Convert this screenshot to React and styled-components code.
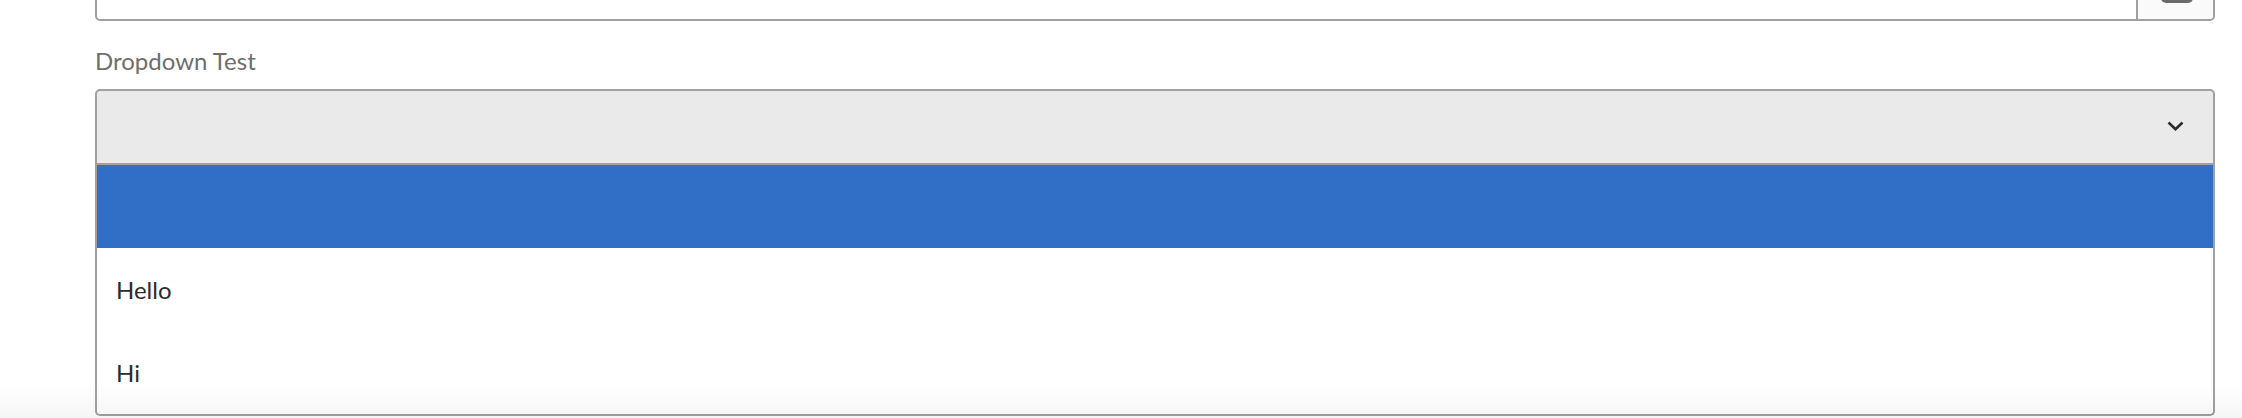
import React from "react";
import styled, { createGlobalStyle } from "styled-components";

const GlobalStyle = createGlobalStyle`
  html, body { margin: 0; padding: 0; background: #ffffff; }
  body { font-family: Lato, "Open Sans", sans-serif; }
  * { box-sizing: border-box; }
`;

const Page = styled.div`
  position: relative;
  height: 418px;
  overflow: hidden;
  padding: 0 27px 0 95px;
  &::after {
    content: "";
    position: absolute;
    left: 0;
    right: 0;
    bottom: 0;
    height: 34px;
    pointer-events: none;
    background: linear-gradient(rgba(0, 0, 0, 0), rgba(0, 0, 0, 0.04));
  }
`;

const TextField = styled.div`
  display: flex;
  height: 74px;
  margin-top: -53px;
  border: 2px solid #a0a0a0;
  border-radius: 5px;
  background: #ffffff;
  overflow: hidden;
`;

const TextInput = styled.div`
  flex: 1;
`;

const FieldButton = styled.div`
  width: 77px;
  display: flex;
  align-items: center;
  justify-content: center;
  padding-left: 2px;
  background: #fafafa;
  border-left: 2px solid #a0a0a0;
`;

const Label = styled.div`
  margin-top: 25px;
  font-size: 24px;
  line-height: 29px;
  color: #6e6e6e;
`;

const Picker = styled.div`
  margin-top: 14px;
`;

const Trigger = styled.div`
  height: 76px;
  display: flex;
  align-items: center;
  justify-content: flex-end;
  padding: 0 29px 3px 0;
  background: #eaeaea;
  border: 2px solid #a0a0a0;
  border-radius: 5px 5px 0 0;
`;

const Listbox = styled.div`
  border: 2px solid #a0a0a0;
  border-top: none;
  border-radius: 0 0 5px 5px;
  background: #ffffff;
  overflow: hidden;
`;

const Option = styled.div`
  height: 83px;
  display: flex;
  align-items: center;
  padding-left: 19px;
  font-size: 24px;
  color: #2c2c2c;
  background: ${(p) => (p.$selected ? "#316ec6" : "transparent")};
`;

const CalendarIcon = () => (
  <svg width="32" height="38" viewBox="0 0 32 38">
    <rect x="0" y="4" width="32" height="34" rx="5" fill="#6a6a6a" />
  </svg>
);

const Chevron = () => (
  <svg width="17" height="10" viewBox="0 0 17 10">
    <polyline
      points="1.5,1.5 8.5,8.2 15.5,1.5"
      fill="none"
      stroke="#2c2c2c"
      strokeWidth="2.6"
    />
  </svg>
);

export default function App() {
  const options = [
    { label: "", selected: true },
    { label: "Hello" },
    { label: "Hi" },
  ];
  return (
    <>
      <GlobalStyle />
      <Page>
        <TextField>
          <TextInput />
          <FieldButton>
            <CalendarIcon />
          </FieldButton>
        </TextField>
        <Label>Dropdown Test</Label>
        <Picker>
          <Trigger>
            <Chevron />
          </Trigger>
          <Listbox>
            {options.map((o, i) => (
              <Option key={i} $selected={o.selected}>
                {o.label}
              </Option>
            ))}
          </Listbox>
        </Picker>
      </Page>
    </>
  );
}
